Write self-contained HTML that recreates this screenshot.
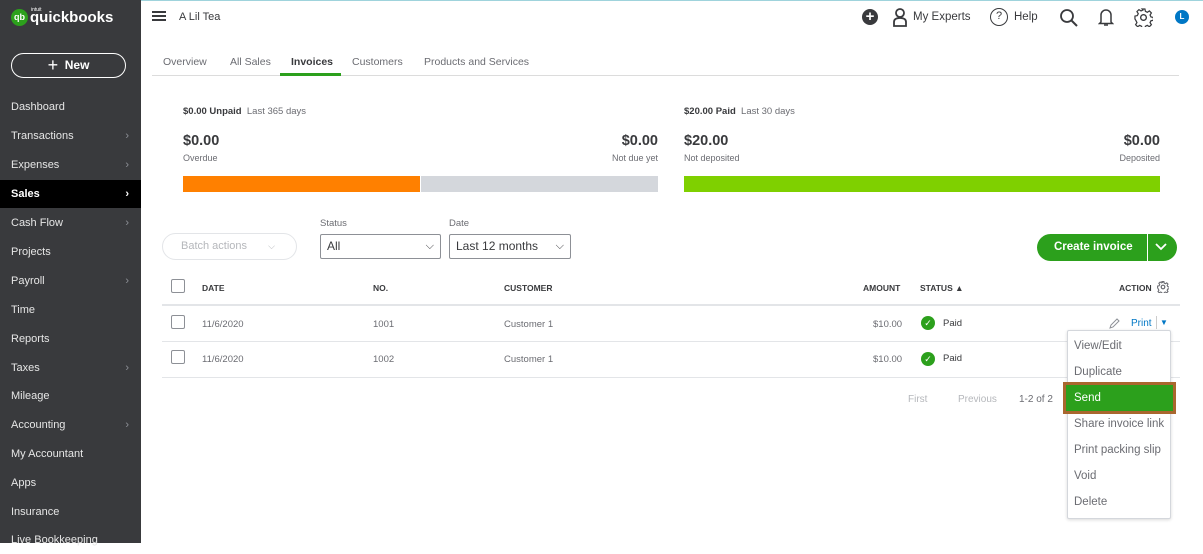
<!DOCTYPE html>
<html><head><meta charset="utf-8"><style>
*{box-sizing:border-box;margin:0;padding:0}
body{width:1203px;height:543px;overflow:hidden;font-family:"Liberation Sans",sans-serif;background:#fff;position:relative;color:#393a3d}
.a{position:absolute;white-space:nowrap}
#sb{position:absolute;left:0;top:0;width:141px;height:543px;background:#393a3d}
.ni{position:absolute;left:0;width:141px;height:28px;color:#e6e6e6;font-size:11px;padding-left:11px;line-height:28px}
.ni .c{position:absolute;right:12px;top:0;color:#8d9096;font-size:11px}
.g{color:#6b6c72}
.hd{font-size:8.5px;font-weight:bold;color:#393a3d}
.cell{font-size:9.5px;color:#6b6c72}
.cb{position:absolute;width:14px;height:14px;border:1px solid #8d9096;border-radius:2px;background:#fff}
.dd{position:absolute;border:1px solid #8d9096;border-radius:2px;height:25px;font-size:12px;line-height:23px;padding-left:6px;color:#393a3d}
.mi{position:absolute;left:1074px;font-size:11.5px;color:#6b6c72}
</style></head><body>
<div style="position:absolute;left:141px;top:0;width:1062px;height:1px;background:#9fd3dc"></div>
<div id="sb">
 <div class="a" style="left:11px;top:9px;width:17px;height:17px;border-radius:50%;background:#2ca01c;color:#fff;font-size:9px;font-weight:bold;line-height:17px;text-align:center">qb</div>
 <div class="a" style="left:31px;top:7px;color:#fff;font-size:5px">intuit</div>
 <div class="a" style="left:30px;top:9px;color:#fff;font-size:15px;font-weight:bold">quickbooks</div>
 <div class="a" style="left:11px;top:53px;width:115px;height:25px;border:1.5px solid #fff;border-radius:13px;color:#fff;font-size:12px;font-weight:bold;text-align:center;line-height:22px"><span style="font-weight:normal;font-size:18px;vertical-align:-2px">+</span>&nbsp; New</div>
 <div class="ni" style="top:93px">Dashboard</div>
 <div class="ni" style="top:122px">Transactions<span class="c">›</span></div>
 <div class="ni" style="top:151px">Expenses<span class="c">›</span></div>
 <div class="ni" style="top:180px;background:#000;color:#fff;font-weight:bold">Sales<span class="c" style="color:#fff">›</span></div>
 <div class="ni" style="top:209px">Cash Flow<span class="c">›</span></div>
 <div class="ni" style="top:238px">Projects</div>
 <div class="ni" style="top:267px">Payroll<span class="c">›</span></div>
 <div class="ni" style="top:296px">Time</div>
 <div class="ni" style="top:325px">Reports</div>
 <div class="ni" style="top:354px">Taxes<span class="c">›</span></div>
 <div class="ni" style="top:382px">Mileage</div>
 <div class="ni" style="top:411px">Accounting<span class="c">›</span></div>
 <div class="ni" style="top:440px">My Accountant</div>
 <div class="ni" style="top:469px">Apps</div>
 <div class="ni" style="top:498px">Insurance</div>
 <div class="ni" style="top:526px">Live Bookkeeping</div>
</div>
<!-- top bar -->
<div class="a" style="left:152px;top:11px;width:14px;height:2px;background:#393a3d;box-shadow:0 4px 0 #393a3d,0 8px 0 #393a3d"></div>
<div class="a" style="left:179px;top:11px;font-size:11px">A Lil Tea</div>
<div class="a" style="left:862px;top:9px;width:16px;height:16px;border-radius:50%;background:#393a3d;color:#fff;font-size:15px;line-height:15px;text-align:center;font-weight:bold">+</div>
<svg class="a" style="left:892px;top:8px" width="16" height="19" viewBox="0 0 16 19"><circle cx="8" cy="5" r="4" fill="none" stroke="#393a3d" stroke-width="1.8"/><path d="M2 18v-4q0-4 6-4q6 0 6 4v4z" fill="none" stroke="#393a3d" stroke-width="1.8"/></svg>
<div class="a" style="left:913px;top:11px;font-size:11.5px">My Experts</div>
<div class="a" style="left:990px;top:8px;width:18px;height:18px;border:1.5px solid #393a3d;border-radius:50%;font-size:11px;text-align:center;line-height:15px">?</div>
<div class="a" style="left:1014px;top:11px;font-size:11.5px">Help</div>
<svg class="a" style="left:1059px;top:8px" width="20" height="20"><circle cx="8" cy="8" r="6" fill="none" stroke="#393a3d" stroke-width="1.8"/><path d="M12.5 12.5L18 18" stroke="#393a3d" stroke-width="2"/></svg>
<svg class="a" style="left:1098px;top:7px" width="16" height="20"><path d="M3 15V8a5 5 0 0 1 10 0v7l1.5 1.5H1.5z" fill="none" stroke="#393a3d" stroke-width="1.5"/><path d="M6 18h4" stroke="#393a3d" stroke-width="1.5"/></svg>
<svg class="a" style="left:1134px;top:8px" width="19" height="19" viewBox="0 0 20 20"><circle cx="10" cy="10" r="3" fill="none" stroke="#393a3d" stroke-width="1.4"/><path d="M8.5 1h3l.5 2.5 2 1 2.2-1.4 2.1 2.1-1.4 2.2 1 2 2.5.5v3l-2.5.5-1 2 1.4 2.2-2.1 2.1-2.2-1.4-2 1-.5 2.5h-3l-.5-2.5-2-1-2.2 1.4-2.1-2.1 1.4-2.2-1-2L1 11.5v-3l2.5-.5 1-2-1.4-2.2 2.1-2.1 2.2 1.4 2-1z" fill="none" stroke="#393a3d" stroke-width="1.3"/></svg>
<div class="a" style="left:1175px;top:10px;width:14px;height:14px;border-radius:50%;background:#0077c5;color:#fff;font-size:8px;font-weight:bold;text-align:center;line-height:14px">L</div>
<!-- tabs -->
<div class="a" style="left:152px;top:75px;width:1027px;height:1px;background:#dcdcdc"></div>
<div class="a g" style="left:163px;top:56px;font-size:10.5px">Overview</div>
<div class="a g" style="left:230px;top:56px;font-size:10.5px">All Sales</div>
<div class="a" style="left:291px;top:56px;font-size:10.5px;font-weight:bold">Invoices</div>
<div class="a" style="left:280px;top:73px;width:61px;height:3px;background:#2ca01c"></div>
<div class="a g" style="left:352px;top:56px;font-size:10.5px">Customers</div>
<div class="a g" style="left:424px;top:56px;font-size:10.5px">Products and Services</div>
<!-- summary -->
<div class="a" style="left:183px;top:106px;font-size:9.5px"><b>$0.00 Unpaid</b> &nbsp;<span class="g">Last 365 days</span></div>
<div class="a" style="left:183px;top:133px;font-size:14.5px;font-weight:bold">$0.00</div>
<div class="a g" style="left:183px;top:153px;font-size:9px">Overdue</div>
<div class="a" style="left:610px;top:133px;font-size:14.5px;font-weight:bold;width:48px;text-align:right">$0.00</div>
<div class="a g" style="left:598px;top:153px;font-size:9px;width:60px;text-align:right">Not due yet</div>
<div class="a" style="left:183px;top:176px;width:237px;height:16px;background:#ff8000"></div>
<div class="a" style="left:421px;top:176px;width:237px;height:16px;background:#d4d7dc"></div>
<div class="a" style="left:684px;top:106px;font-size:9.5px"><b>$20.00 Paid</b> &nbsp;<span class="g">Last 30 days</span></div>
<div class="a" style="left:684px;top:133px;font-size:14.5px;font-weight:bold">$20.00</div>
<div class="a g" style="left:684px;top:153px;font-size:9px">Not deposited</div>
<div class="a" style="left:1110px;top:133px;font-size:14.5px;font-weight:bold;width:50px;text-align:right">$0.00</div>
<div class="a g" style="left:1100px;top:153px;font-size:9px;width:60px;text-align:right">Deposited</div>
<div class="a" style="left:684px;top:176px;width:476px;height:16px;background:#7fd000"></div>
<!-- filters -->
<div class="a" style="left:162px;top:233px;width:135px;height:27px;border:1px solid #e3e5e8;border-radius:14px;color:#b5b7bb;font-size:11px;line-height:25px;padding-left:18px">Batch actions <span style="margin-left:18px;font-size:9px">⌵</span></div>
<div class="a g" style="left:320px;top:218px;font-size:9.5px">Status</div>
<div class="dd" style="left:320px;top:234px;width:121px">All<span style="position:absolute;right:6px;font-size:11px">⌵</span></div>
<div class="a g" style="left:449px;top:218px;font-size:9.5px">Date</div>
<div class="dd" style="left:449px;top:234px;width:122px">Last 12 months<span style="position:absolute;right:6px;font-size:11px">⌵</span></div>
<div class="a" style="left:1037px;top:234px;width:140px;height:27px;background:#2ca01c;border-radius:14px;color:#fff;font-size:11.5px;font-weight:bold;line-height:27px;padding-left:17px">Create invoice</div>
<div class="a" style="left:1147px;top:234px;width:1px;height:27px;background:#fff"></div>
<svg class="a" style="left:1154px;top:242px" width="14" height="10"><path d="M2 2l5 5 5-5" fill="none" stroke="#fff" stroke-width="1.8"/></svg>
<!-- table -->
<div class="cb" style="left:171px;top:279px"></div>
<div class="a hd" style="left:202px;top:283px">DATE</div>
<div class="a hd" style="left:373px;top:283px">NO.</div>
<div class="a hd" style="left:504px;top:283px">CUSTOMER</div>
<div class="a hd" style="left:863px;top:283px">AMOUNT</div>
<div class="a hd" style="left:920px;top:283px">STATUS ▲</div>
<div class="a hd" style="left:1119px;top:283px">ACTION</div>
<svg class="a" style="left:1157px;top:281px" width="12" height="12" viewBox="0 0 20 20"><circle cx="10" cy="10" r="3" fill="none" stroke="#6b6c72" stroke-width="2"/><path d="M8.5 1h3l.5 2.5 2 1 2.2-1.4 2.1 2.1-1.4 2.2 1 2 2.5.5v3l-2.5.5-1 2 1.4 2.2-2.1 2.1-2.2-1.4-2 1-.5 2.5h-3l-.5-2.5-2-1-2.2 1.4-2.1-2.1 1.4-2.2-1-2L1 11.5v-3l2.5-.5 1-2-1.4-2.2 2.1-2.1 2.2 1.4 2-1z" fill="none" stroke="#6b6c72" stroke-width="1.8"/></svg>
<div class="a" style="left:162px;top:304px;width:1018px;height:2px;background:#e3e5e8"></div>
<div class="cb" style="left:171px;top:315px"></div>
<div class="a cell" style="left:202px;top:319px">11/6/2020</div>
<div class="a cell" style="left:373px;top:319px">1001</div>
<div class="a cell" style="left:504px;top:319px">Customer 1</div>
<div class="a cell" style="left:873px;top:319px">$10.00</div>
<div class="a" style="left:921px;top:316px;width:14px;height:14px;border-radius:50%;background:#2ca01c;color:#fff;font-size:9px;text-align:center;line-height:14px">✓</div>
<div class="a cell" style="left:943px;top:318px;color:#393a3d">Paid</div>
<svg class="a" style="left:1108px;top:317px" width="12" height="12"><path d="M2 11l1-3 6-6 2 2-6 6z" fill="none" stroke="#8d9096"/></svg>
<div class="a" style="left:1131px;top:318px;font-size:10px;color:#0077c5">Print</div>
<div class="a" style="left:1156px;top:316px;width:1px;height:13px;background:#ccc"></div>
<div class="a" style="left:1160px;top:318px;font-size:8px;color:#0077c5">▼</div>
<div class="a" style="left:162px;top:341px;width:1018px;height:1px;background:#e3e5e8"></div>
<div class="cb" style="left:171px;top:350px"></div>
<div class="a cell" style="left:202px;top:354px">11/6/2020</div>
<div class="a cell" style="left:373px;top:354px">1002</div>
<div class="a cell" style="left:504px;top:354px">Customer 1</div>
<div class="a cell" style="left:873px;top:354px">$10.00</div>
<div class="a" style="left:921px;top:352px;width:14px;height:14px;border-radius:50%;background:#2ca01c;color:#fff;font-size:9px;text-align:center;line-height:14px">✓</div>
<div class="a cell" style="left:943px;top:353px;color:#393a3d">Paid</div>
<div class="a" style="left:162px;top:377px;width:1018px;height:1px;background:#e3e5e8"></div>
<div class="a" style="left:908px;top:394px;font-size:10px;color:#b5b7bb">First</div>
<div class="a" style="left:958px;top:394px;font-size:10px;color:#b5b7bb">Previous</div>
<div class="a" style="left:1019px;top:394px;font-size:10px;color:#6b6c72">1-2 of 2</div>
<!-- menu -->
<div class="a" style="left:1067px;top:330px;width:104px;height:189px;background:#fff;border:1px solid #d4d7dc;border-radius:2px;box-shadow:0 1px 3px rgba(0,0,0,.15)"></div>
<div class="mi" style="top:340px">View/Edit</div>
<div class="mi" style="top:366px">Duplicate</div>
<div class="a" style="left:1063px;top:382px;width:113px;height:32px;border:3px solid #a9672e"></div>
<div class="a" style="left:1066px;top:385px;width:107px;height:26px;background:#2ca01c"></div>
<div class="mi" style="top:392px;color:#fff">Send</div>
<div class="mi" style="top:418px">Share invoice link</div>
<div class="mi" style="top:444px">Print packing slip</div>
<div class="mi" style="top:470px">Void</div>
<div class="mi" style="top:496px">Delete</div>
</body></html>
